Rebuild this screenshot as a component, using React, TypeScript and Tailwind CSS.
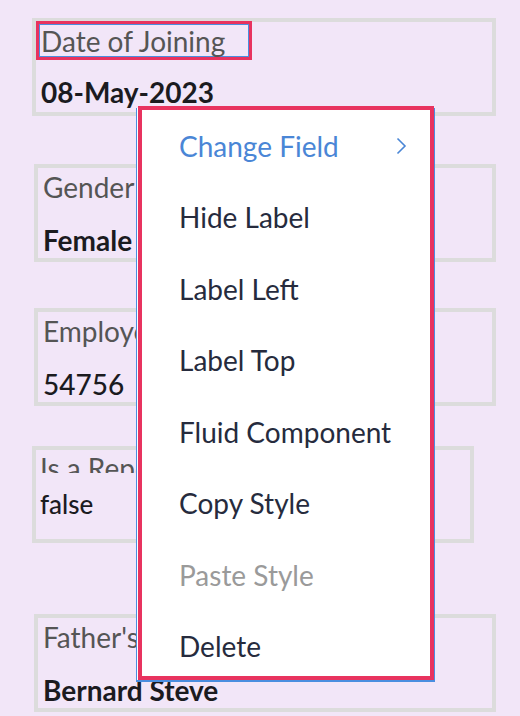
import React from "react";

const font = { fontFamily: "Lato, 'Noto Sans', sans-serif" };

const menuItems = [
  { label: "Change Field", tone: "active", sub: true },
  { label: "Hide Label", tone: "normal" },
  { label: "Label Left", tone: "normal" },
  { label: "Label Top", tone: "normal" },
  { label: "Fluid Component", tone: "normal" },
  { label: "Copy Style", tone: "normal" },
  { label: "Paste Style", tone: "disabled" },
  { label: "Delete", tone: "normal" },
];

function FieldCard({
  label,
  value,
  className,
  valueClass = "font-bold",
}: {
  label: string;
  value: string;
  className: string;
  valueClass?: string;
}) {
  return (
    <div className={`border-4 border-[#dcdcdc] h-[98px] pl-[5px] pt-[4px] overflow-hidden ${className}`}>
      <div className="text-[28px] leading-[31px] text-[#555555] whitespace-nowrap">{label}</div>
      <div className={`mt-[22px] text-[28px] leading-[31px] text-[#1b1b1f] whitespace-nowrap ${valueClass}`}>
        {value}
      </div>
    </div>
  );
}

function ContextMenu() {
  return (
    <div className="absolute left-[136px] top-[108px] w-[299px] h-[574px] bg-white border-l border-r-2 border-b-2 border-[#4a8ee0]">
      <div className="absolute left-[1px] -top-[2px] w-[296px] h-[574px] border-4 border-[#e8335f] pointer-events-none z-10" />
      <div className="flex flex-col pt-[2px]">
        {menuItems.map((item) => (
          <div
            key={item.label}
            className={`h-[71.5px] flex items-center pl-[42px] pr-[26px] text-[28px] ${
              item.tone === "active"
                ? "text-[#4a86d6]"
                : item.tone === "disabled"
                ? "text-[#9a9a9a]"
                : "text-[#262b3d]"
            }`}
          >
            <span className="flex-1 whitespace-nowrap">{item.label}</span>
            {item.sub && (
              <svg width="11" height="18" viewBox="0 0 11 18" fill="none">
                <path d="M1.5 1.5 L9 9 L1.5 16.5" stroke="#4a86d6" strokeWidth="1.6" />
              </svg>
            )}
          </div>
        ))}
      </div>
    </div>
  );
}

export default function App() {
  return (
    <div className="relative w-[520px] h-[716px] overflow-hidden bg-[#f2e6f8]" style={font}>
      <div className="flex flex-col">
        <div className="ml-[32px] mt-[18px] w-[464px] h-[98px] border-4 border-[#dcdcdc] pl-[3px] pt-[2px]">
          <div className="relative w-[210px] h-[33px] border border-[#4a8ee0] pl-[1px]">
            <div className="absolute -inset-[4px] border-[3px] border-[#e8335f]" />
            <div className="text-[28px] leading-[32px] text-[#555555] whitespace-nowrap">Date of Joining</div>
          </div>
          <div className="mt-[20px] pl-[2px] text-[28px] leading-[31px] font-bold text-[#1b1b1f]">08-May-2023</div>
        </div>

        <FieldCard label="Gender" value="Female" className="ml-[34px] mt-[48px] w-[462px]" />
        <FieldCard
          label="Employee ID"
          value="54756"
          valueClass="font-medium"
          className="ml-[34px] mt-[46px] w-[462px]"
        />

        <div className="ml-[32px] mt-[40px] w-[442px] h-[97px] border-4 border-[#dcdcdc] pl-[4px]">
          <div className="h-[23px] overflow-hidden pt-[3px]">
            <div className="text-[28px] leading-[31px] text-[#555555] whitespace-nowrap">Is a Reporting Manager</div>
          </div>
          <div className="mt-[17px] text-[26px] leading-[29px] font-medium text-[#1b1b1f]">false</div>
        </div>

        <FieldCard label="Father's Name" value="Bernard Steve" className="ml-[34px] mt-[71px] w-[462px]" />
      </div>
      <ContextMenu />
    </div>
  );
}
